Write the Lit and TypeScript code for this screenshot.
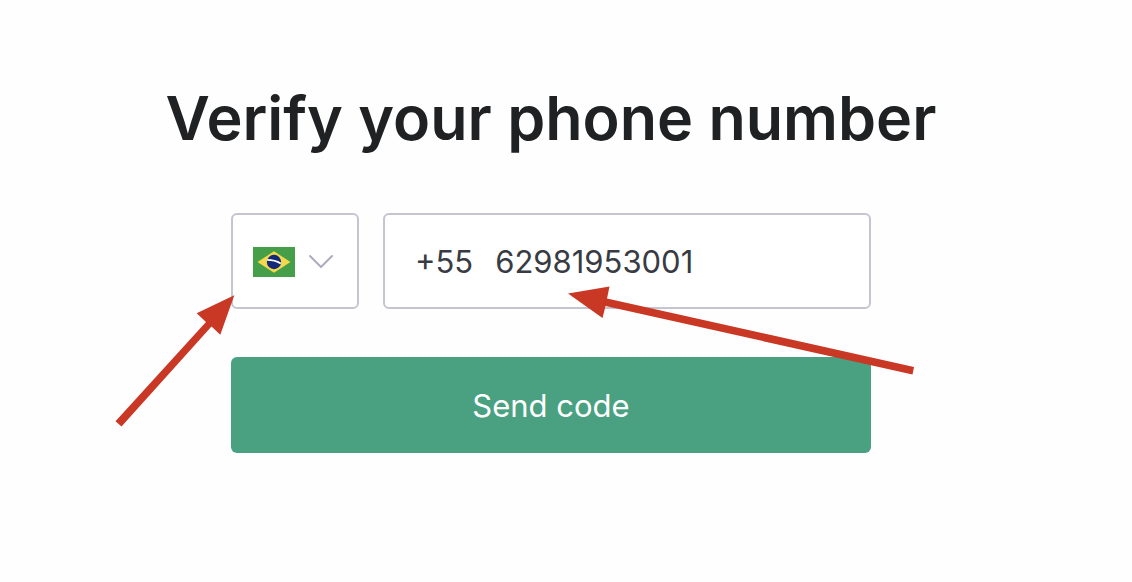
import { LitElement, html, css } from "lit";
import { customElement, state } from "lit/decorators.js";

@customElement("app-root")
export class AppRoot extends LitElement {
  @state() private phone = "62981953001";

  static styles = css`
    :host {
      display: block;
      box-sizing: border-box;
      min-height: 100vh;
      padding: 80px 30px 40px 0;
      background: #fefefe;
      font-family: Inter, "Liberation Sans", sans-serif;
      color: #383b43;
    }
    .title {
      margin: 0 0 57px;
      font-size: 61px;
      line-height: 76px;
      font-weight: 600;
      text-align: center;
      color: #202123;
    }
    .form {
      position: relative;
      display: grid;
      grid-template-columns: 128px minmax(0, 1fr);
      gap: 48px 24px;
      max-width: 640px;
      margin: 0 auto;
    }
    .country {
      display: grid;
      grid-template-columns: 42px 26px;
      align-items: center;
      gap: 13px;
      padding-left: 22px;
      isolation: isolate;
    }
    .select {
      grid-area: 1 / 1;
      z-index: -1;
      width: 128px;
      height: 96px;
      margin: 0 0 0 -22px;
      appearance: none;
      border: 2px solid #c5c5d2;
      border-radius: 6px;
      background: #fff;
      color: transparent;
      font: inherit;
    }
    .flag {
      grid-area: 1 / 1;
      pointer-events: none;
    }
    .chevron {
      grid-area: 1 / 2;
      pointer-events: none;
    }
    .phone {
      display: flex;
      align-items: center;
      gap: 22px;
      box-sizing: border-box;
      height: 96px;
      padding: 2px 30px 0;
      border: 2px solid #c5c5d2;
      border-radius: 6px;
      background: #fff;
      font-size: 31px;
      line-height: 40px;
    }
    .number {
      flex: 1;
      min-width: 0;
      padding: 0;
      border: 0;
      outline: 0;
      background: none;
      color: inherit;
      font: inherit;
    }
    .send {
      grid-column: 1 / -1;
      height: 96px;
      padding: 2px 30px 0;
      border: 0;
      border-radius: 6px;
      background: #4aa181;
      color: #fff;
      font-family: inherit;
      font-size: 31px;
      line-height: 40px;
    }
    .arrows {
      position: absolute;
      top: 0;
      left: 0;
      overflow: visible;
      pointer-events: none;
    }
  `;

  private onInput(e: Event) {
    this.phone = (e.target as HTMLInputElement).value;
  }

  render() {
    return html`
      <h1 class="title">Verify your phone number</h1>
      <form class="form" @submit=${(e: Event) => e.preventDefault()}>
        <div class="country">
          <select class="select" aria-label="Country">
            <option>Brazil</option>
          </select>
          <svg class="flag" width="42" height="32" viewBox="0 -2 42 32" aria-hidden="true">
            <path fill="#459f49" d="M0 0h42v30H0z" />
            <path fill="#f5d94c" d="M21 4.300 37.500 15 21 25.700 4.500 15z" />
            <circle cx="21" cy="15" r="7.200" fill="#142a78" />
            <path d="M14.200 12.800c5 0 9.600 1.200 13.600 3.600" fill="none" stroke="#fff" stroke-width="1.800" />
          </svg>
          <svg class="chevron" width="26" height="16" viewBox="0 0 26 16" aria-hidden="true">
            <path
              d="m2 3 11 11L24 3"
              fill="none"
              stroke="#acacbe"
              stroke-width="2"
              stroke-linecap="round"
              stroke-linejoin="round"
            />
          </svg>
        </div>
        <label class="phone">
          <span>+55</span>
          <input class="number" type="tel" aria-label="Phone number" .value=${this.phone} @input=${this.onInput} />
        </label>
        <button class="send" type="submit">Send code</button>
        <svg class="arrows" width="640" height="240" viewBox="0 0 640 240" aria-hidden="true">
          <g fill="#c93725">
            <path d="M3.300 82.300-34.300 100.300-25 109-115.500 208.300-109.500 213.500-19.500 113.500-10.700 121.700z" />
            <path d="M337 80.500 378.500 73.500 376 85.500 683 154l-1.500 7.500L374.500 93 371.500 105z" />
          </g>
        </svg>
      </form>
    `;
  }
}
